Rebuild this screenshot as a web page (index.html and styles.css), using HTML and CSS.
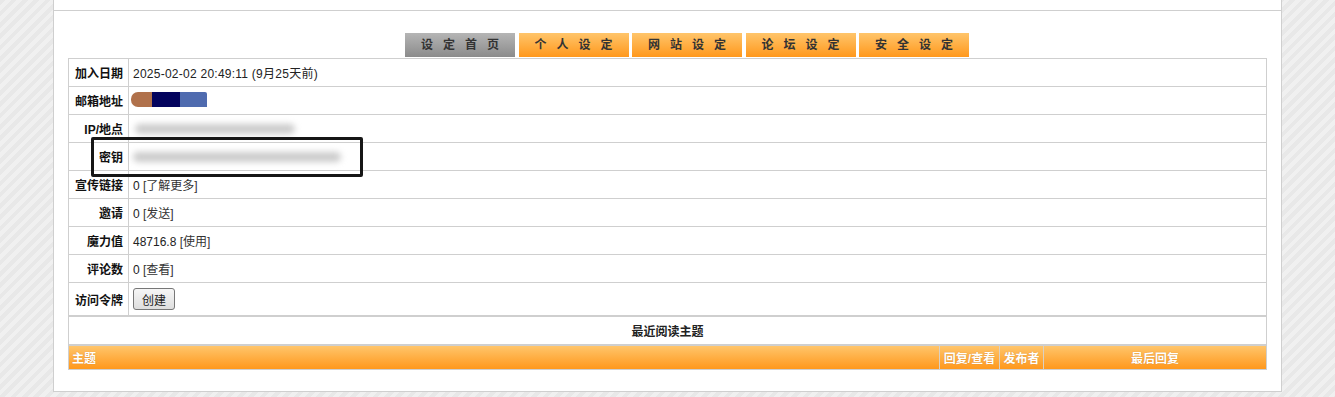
FILE: index.html
```html
<!DOCTYPE html>
<html lang="zh-CN">
<head>
    <meta charset="UTF-8">
    <title>控制面板</title>
    <link rel="stylesheet" href="styles.css">
</head>
<body>
    <div class="page">
        <div class="top-strip"></div>
        <div class="main">
            <div class="tabs">
                <a class="tab tab-gray" href="#">设定首页</a>
                <a class="tab" href="#">个人设定</a>
                <a class="tab" href="#">网站设定</a>
                <a class="tab" href="#">论坛设定</a>
                <a class="tab" href="#">安全设定</a>
            </div>
            <div class="wrap">
                <table class="info">
                    <tr>
                        <td class="label">加入日期</td>
                        <td class="value date">2025-02-02 20:49:11 (9月25天前)</td>
                    </tr>
                    <tr>
                        <td class="label">邮箱地址</td>
                        <td class="value"><span class="mask"><span class="m1"></span><span class="m2"></span><span class="m3"></span></span></td>
                    </tr>
                    <tr>
                        <td class="label">IP/地点</td>
                        <td class="value"><span class="blur blur-ip"></span></td>
                    </tr>
                    <tr>
                        <td class="label">密钥</td>
                        <td class="value"><span class="blur blur-key"></span></td>
                    </tr>
                    <tr>
                        <td class="label">宣传链接</td>
                        <td class="value">0 <a href="#">[了解更多]</a></td>
                    </tr>
                    <tr>
                        <td class="label">邀请</td>
                        <td class="value">0 <a href="#">[发送]</a></td>
                    </tr>
                    <tr>
                        <td class="label">魔力值</td>
                        <td class="value">48716.8 <a href="#">[使用]</a></td>
                    </tr>
                    <tr>
                        <td class="label">评论数</td>
                        <td class="value">0 <a href="#">[查看]</a></td>
                    </tr>
                    <tr class="row-tall">
                        <td class="label">访问令牌</td>
                        <td class="value"><button class="btn">创建</button></td>
                    </tr>
                </table>
                <table class="recent">
                    <tr><td>最近阅读主题</td></tr>
                </table>
                <table class="topics">
                    <tr>
                        <td class="col-title">主题</td>
                        <td class="col-reply">回复/查看</td>
                        <td class="col-author">发布者</td>
                        <td class="col-last">最后回复</td>
                    </tr>
                </table>
                <div class="mark"></div>
            </div>
        </div>
    </div>
</body>
</html>
```

FILE: styles.css
```css
body {
    margin: 0;
    font-family: 'Liberation Sans', 'Noto Sans CJK SC', sans-serif;
    font-size: 12px;
    color: #222;
    background: repeating-linear-gradient(135deg, #e8e8e8 0, #e8e8e8 4px, #f0f0f0 4px, #f0f0f0 8px);
    min-height: 397px;
}
.page {
    margin: 0 53px;
    background: #fff;
    border: 1px solid #cfcfcf;
    border-top: none;
}
.top-strip {
    height: 10px;
    border-bottom: 1px solid #cfcfcf;
}
.main {
    padding: 22px 14px 21px 14px;
}
.tabs {
    display: flex;
    gap: 3.5px;
    padding-left: 337px;
    margin-bottom: 1px;
}
.tab {
    display: block;
    width: 110px;
    height: 24px;
    line-height: 24px;
    text-align: center;
    font-weight: bold;
    color: #333;
    text-decoration: none;
    letter-spacing: 10px;
    text-indent: 10px;
    background: linear-gradient(to bottom, #ffc56b, #ff981c);
}
.tab-gray {
    background: linear-gradient(to bottom, #b5b5b5, #8b8b8b);
}
.wrap {
    position: relative;
}
table {
    width: 100%;
    border-collapse: collapse;
    border: 1px solid #cfcfcf;
}
td {
    border: 1px solid #cfcfcf;
    padding: 0 4px;
    height: 27px;
}
.info .label {
    width: 50px;
    text-align: right;
    font-weight: bold;
    padding-right: 5px;
    color: #111;
}
.info .date {
    letter-spacing: 0.25px;
}
.info a {
    color: #333;
    text-decoration: none;
}
.row-tall td {
    height: 32px;
}
.btn {
    font-family: 'Liberation Sans', 'Noto Sans CJK SC', sans-serif;
    font-size: 12px;
    color: #222;
    padding: 0 8px;
    height: 22px;
    border: 1px solid #777;
    border-radius: 3px;
    background: linear-gradient(to bottom, #f6f6f6, #dedede);
    vertical-align: middle;
}
.mask {
    display: inline-flex;
    height: 15px;
    margin-left: -2px;
    vertical-align: 0;
}
.m1 {
    width: 21px;
    background: #b0714b;
    border-radius: 7px 0 0 7px;
}
.m2 {
    width: 28px;
    background: #04045e;
}
.m3 {
    width: 27px;
    background: #4f6baf;
    border-radius: 0 2px 0 0;
}
.blur {
    display: inline-block;
    height: 10px;
    background: #cbcbcb;
    border-radius: 5px;
    filter: blur(3px);
    vertical-align: middle;
}
.blur-ip {
    width: 160px;
    margin-left: 2px;
}
.blur-key {
    width: 208px;
    margin-left: 0;
}
.recent,
.topics {
    border-collapse: separate;
    border-spacing: 0;
}
.recent td {
    border: none;
    text-align: center;
    font-weight: bold;
}
.topics td {
    height: 23px;
    color: #fff;
    font-weight: bold;
    background: linear-gradient(to bottom, #ffc56b, #ff981c);
    border: none;
    border-left: 1px solid #d9d0c4;
    text-shadow: 0 0 1px rgba(120, 60, 0, 0.4);
}
.topics .col-title {
    padding-left: 3px;
    border-left: none;
}
.topics .col-reply {
    width: 53px;
    text-align: center;
    padding: 0 3px;
}
.topics .col-author {
    width: 37px;
    text-align: center;
    padding: 0 3px;
}
.topics .col-last {
    width: 214px;
    text-align: center;
}
.mark {
    position: absolute;
    left: 23px;
    top: 79px;
    width: 266px;
    height: 34px;
    border: 3px solid #161616;
    border-radius: 2px;
}
```
